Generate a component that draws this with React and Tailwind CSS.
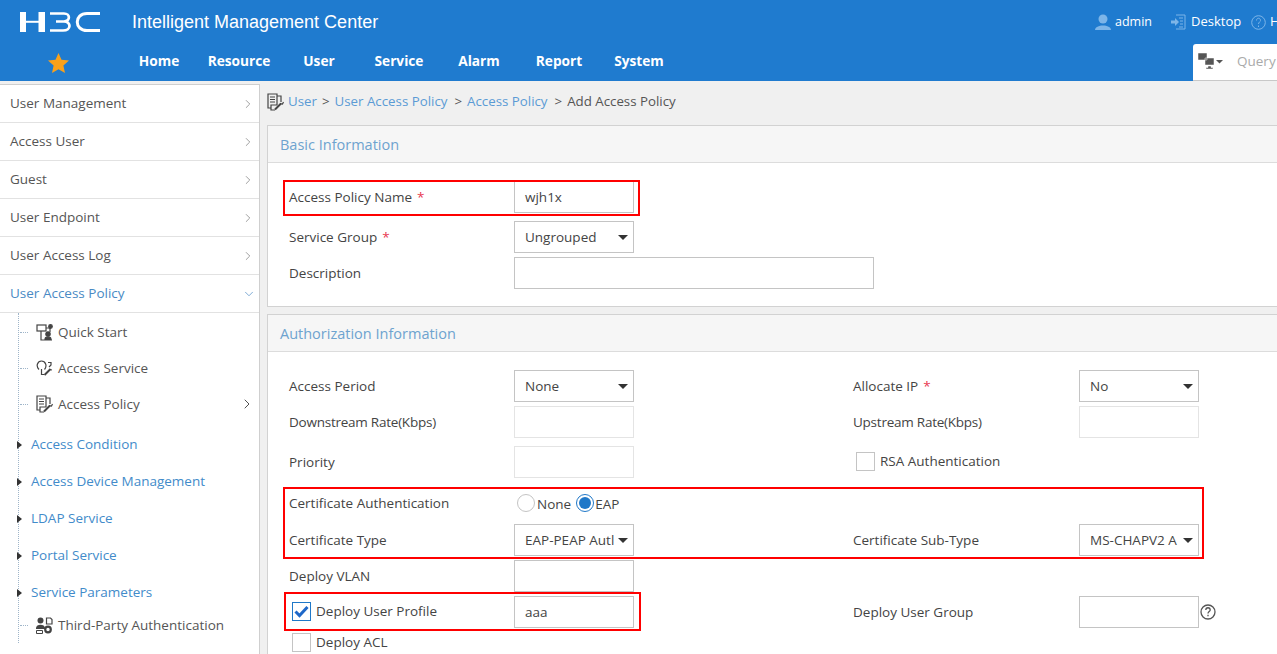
import React from "react";
import { ChevronRight, ChevronDown } from "lucide-react";

const FONT = "font-['Open_Sans','Noto_Sans',sans-serif]";

// ── Small drawn icons ────────────────────────────────────────────────────────
function Logo() {
  return (
    <svg width="82" height="20" viewBox="0 0 82 20" fill="none" stroke="#fff">
      <path d="M1 0h6v20H1zM19.500 0h6.500v20h-6.500z" fill="#fff" stroke="none" />
      <path d="M6 9.800h14" strokeWidth="2" />
      <path d="M31 1.500h14c6.500 0 6.500 7.500 0 8h-8M45 9.500c7.500 0 7.500 9-1 9H31" strokeWidth="2.700" />
      <path d="M81 1.500H68C55 1.500 55 18.500 68 18.500h13" strokeWidth="3" />
    </svg>
  );
}

function PolicyIcon({ className = "" }) {
  return (
    <svg width="17" height="18" viewBox="0 0 17 18" fill="none" stroke="#444" strokeWidth="1.200" className={className}>
      <path d="M1 1h9v11H4v3H1zM10 3h4v6M4 15v2h4" />
      <path d="M3 4h5M3 6.500h5M3 9h5" />
      <path d="M8 16.500l6-6" strokeWidth="2" />
      <path d="M13 10.500l2.500.5 1-2" />
    </svg>
  );
}

function QuickStartIcon() {
  return (
    <svg width="17" height="17" viewBox="0 0 17 17" fill="none" stroke="#444" strokeWidth="1.200">
      <rect x="1" y="1" width="9" height="6" />
      <path d="M5 7v9h11M10 4h4v4" />
      <circle cx="14.500" cy="2.500" r="1.800" fill="#444" />
      <circle cx="12" cy="10" r="2.200" fill="#444" />
      <path d="M9 15.500c0-3.500 6-3.500 6 0z" fill="#444" />
    </svg>
  );
}

function ServiceIcon() {
  return (
    <svg width="17" height="17" viewBox="0 0 17 17" fill="none" stroke="#444" strokeWidth="1.200">
      <path d="M3 9.500C-.5 6 1.500 1 5.500 1s6 5 3 8.500" />
      <path d="M5.500 9v5.500H8" />
      <path d="M8.500 15l6-6" strokeWidth="2" />
      <path d="M12 2.500h3V5l-2 2M13.500 9.500l2.500.5" />
    </svg>
  );
}

function ThirdPartyIcon() {
  return (
    <svg width="17" height="17" viewBox="0 0 17 17" fill="#444">
      <circle cx="4.500" cy="3.500" r="3" />
      <path d="M0 11c0-4.500 9-4.500 9 0v1H0z" />
      <path d="M10.500 1h4l1.500 1.500V7h-5.500z" fill="none" stroke="#444" strokeWidth="1.200" />
      <circle cx="12" cy="12.500" r="2.800" fill="none" stroke="#444" strokeWidth="2.200" />
      <path d="M.500 13.500h6v3h-6z" fill="none" stroke="#444" />
    </svg>
  );
}

// ── Form bits ────────────────────────────────────────────────────────────────
function Label({ children, star, tight }) {
  return (
    <span className={`text-[13.500px] text-[#444] whitespace-nowrap ${tight ? "tracking-[-0.24px]" : ""}`}>
      {children}
      {star && <span className="text-[#e8384f] ml-[5px]">*</span>}
    </span>
  );
}

function Box({ children, wide, light }) {
  return (
    <div className={`${wide ? "w-[360px]" : "w-[120px]"} h-[32px] border ${light ? "border-[#e4e4e4]" : "border-[#c4c4c4]"} bg-white pl-[10px] flex items-center text-[13.500px] text-[#444]`}>
      {children}
    </div>
  );
}

function Select({ value }) {
  return (
    <div className="w-[120px] h-[32px] border border-[#c4c4c4] bg-white pl-[10px] pr-[3px] flex items-center text-[13.500px] text-[#444]">
      <span className="flex-1 whitespace-nowrap">{value}</span>
      <span className="w-0 h-0 ml-[1px] mr-[2px] shrink-0 border-x-[5px] border-x-transparent border-t-[5px] border-t-[#333]" />
    </div>
  );
}

function Check({ checked }) {
  return (
    <span className={`w-[19px] h-[19px] shrink-0 flex items-center justify-center border bg-white ${checked ? "border-[#1f78c8]" : "border-[#c4c4c4]"}`}>
      {checked && (
        <svg width="15" height="13" viewBox="0 0 15 13">
          <path d="M1.500 6.500l4 4 8-8.500" fill="none" stroke="#1f68c8" strokeWidth="3" />
        </svg>
      )}
    </span>
  );
}

function Radio({ checked }) {
  return (
    <span className={`w-[18px] h-[18px] rounded-full shrink-0 flex items-center justify-center border bg-white ${checked ? "border-[#1f78c8]" : "border-[#c4c4c4]"}`}>
      {checked && <span className="w-[12px] h-[12px] rounded-full bg-[#1f78c8]" />}
    </span>
  );
}

// One form line: label / field / label / field, on the same column grid
function Row({ h, a, b, c, d }) {
  return (
    <div className={`grid grid-cols-[225px_339px_226px_120px] items-center ${h}`}>
      <div className="flex items-center">{a}</div>
      <div>{b}</div>
      <div className="flex items-center">{c}</div>
      <div>{d}</div>
    </div>
  );
}

function Card({ title, children, className }) {
  return (
    <section className={`border border-r-0 border-[#d2d2d2] bg-white ${className}`}>
      <h2 className="h-[37px] flex items-center pl-[12px] pt-[1px] bg-[#f6f6f6] border-b border-[#dcdcdc] text-[14.500px] font-normal text-[#6ea3cf]">
        {title}
      </h2>
      {children}
    </section>
  );
}

// ── Sidebar ──────────────────────────────────────────────────────────────────
const topMenus = ["User Management", "Access User", "Guest", "User Endpoint", "User Access Log"];
const treeGroups = ["Access Condition", "Access Device Management", "LDAP Service", "Portal Service", "Service Parameters"];

function Sidebar() {
  return (
    <aside className="w-[260px] h-[570px] mt-[3px] shrink-0 bg-white border-t border-r border-[#cfcfcf] overflow-hidden">
      {topMenus.map((m) => (
        <div key={m} className="h-[38px] flex items-center justify-between pl-[10px] pr-[4px] border-b border-[#e2e2e2] text-[13.500px] text-[#555]">
          {m}
          <ChevronRight size={14} strokeWidth={1.200} color="#777" />
        </div>
      ))}
      <div className="h-[38px] flex items-center justify-between pl-[10px] pr-[3px] border-b border-[#e2e2e2] text-[13.500px] text-[#4a8ac4]">
        User Access Policy
        <ChevronDown size={14} strokeWidth={1.200} color="#4a8ac4" />
      </div>

      <div className="relative">
        <div className="absolute left-[18px] top-0 bottom-0 border-l border-dotted border-[#9fb5c9]" />
        <div className="pt-[1px]">
          <TreeLeaf icon={<QuickStartIcon />} label="Quick Start" />
          <TreeLeaf icon={<ServiceIcon />} label="Access Service" />
          <TreeLeaf icon={<PolicyIcon />} label="Access Policy" arrow />
        </div>
        <div className="pt-[4px]">
          {treeGroups.map((g) => (
            <div key={g} className="relative h-[37px] flex items-center pl-[31px] text-[13.500px] text-[#428bca]">
              <span className="absolute left-[17px] w-0 h-0 border-y-[4px] border-y-transparent border-l-[5px] border-l-[#333]" />
              {g}
            </div>
          ))}
        </div>
        <div className="-mt-[4px]">
          <TreeLeaf icon={<ThirdPartyIcon />} label="Third-Party Authentication" />
        </div>
      </div>
    </aside>
  );
}

function TreeLeaf({ icon, label, arrow }) {
  return (
    <div className="relative h-[36px] flex items-center pl-[36px] pr-[4px] text-[13.500px] text-[#555]">
      <span className="absolute left-[20px] w-[8px] border-t border-dotted border-[#9fb5c9]" />
      <span className="w-[22px] shrink-0">{icon}</span>
      <span className="flex-1">{label}</span>
      {arrow && <ChevronRight size={16} strokeWidth={1.400} color="#444" />}
    </div>
  );
}

// ── Page ─────────────────────────────────────────────────────────────────────
const navItems = ["Home", "Resource", "User", "Service", "Alarm", "Report", "System"];

export default function App() {
  return (
    <div className={`w-[1277px] h-[654px] overflow-hidden bg-[#f0f0f0] ${FONT}`}>
      <header className="h-[81px] bg-[#1f7bcf] text-white">
        <div className="h-[44px] flex items-center overflow-hidden">
          <div className="w-[132px] pl-[19px] shrink-0"><Logo /></div>
          <div className="w-[963px] shrink-0 font-['Liberation_Sans',sans-serif] text-[18px]">Intelligent Management Center</div>
          <svg width="16" height="16" viewBox="0 0 16 16" fill="#7db5e8" className="shrink-0">
            <circle cx="8" cy="5" r="4.500" />
            <path d="M0 16c0-6 16-6 16 0z" />
          </svg>
          <span className="ml-[4px] w-[56px] shrink-0 text-[12.500px] font-medium">admin</span>
          <svg width="15" height="16" viewBox="0 0 15 16" fill="none" stroke="#7db5e8" className="shrink-0">
            <path d="M5 1h9v14H5M8 4h4M9 7h3M9 10h3M8 13h4" />
            <path d="M0 6.500h4V4l4 4-4 4V9.500H0z" fill="#7db5e8" stroke="none" />
          </svg>
          <span className="ml-[5px] w-[60px] shrink-0 text-[13px] font-medium">Desktop</span>
          <svg width="15" height="15" viewBox="0 0 15 15" fill="none" stroke="#7db5e8" className="shrink-0">
            <circle cx="7.500" cy="7.500" r="6.800" />
            <path d="M5.500 5.500c0-3 4-3 4 0 0 1.500-2 1.500-2 3.500M7.500 10.500v1.500" />
          </svg>
          <span className="ml-[4px] text-[13px] font-medium shrink-0">H</span>
        </div>
        <div className="h-[37px] flex items-stretch">
          <div className="w-[119px] shrink-0 flex items-center pl-[48px]">
            <svg width="21" height="20" viewBox="0 0 21 20"><path d="M10.500 0l3 6.800 7.500.8-5.600 5 1.600 7.400-6.500-3.800L4 20l1.600-7.400L0 7.600l7.500-.8z" fill="#f9a11b" /></svg>
          </div>
          <nav className="flex pb-[2px]">
            {navItems.map((n) => (
              <a key={n} className="w-[80px] flex items-center justify-center text-[13.700px] font-bold">{n}</a>
            ))}
          </nav>
          <div className="ml-[514px] w-[84px] shrink-0 bg-white rounded-tl-[3px] border-b border-[#c8c8c8] flex items-center pl-[5px] pb-[2px]">
            <svg width="25" height="18" viewBox="0 0 25 18" fill="#555">
              <path d="M0 1h9v7H0zM7 6h9v7H7zM10 14h3v1.500h2V17H8v-1.500h2z" stroke="#fff" strokeWidth=".5" />
              <path d="M18 8h7l-3.500 3.500z" />
            </svg>
            <span className="ml-[14px] text-[13.500px] text-[#aaa]">Query</span>
          </div>
        </div>
      </header>

      <div className="flex">
        <Sidebar />
        <main className="flex-1 min-w-0 pl-[7px]">
          <div className="h-[44px] pb-[2px] flex items-center text-[13.300px] text-[#555] whitespace-nowrap">
            <PolicyIcon />
            <a className="text-[#5b9bd5] ml-[4px]">User</a><span className="mx-[5px]">&gt;</span>
            <a className="text-[#5b9bd5]">User Access Policy</a><span className="ml-[7px] mr-[5px]">&gt;</span>
            <a className="text-[#5b9bd5]">Access Policy</a><span className="ml-[7px] mr-[5px]">&gt;</span>
            <span>Add Access Policy</span>
          </div>

          <Card title="Basic Information" className="h-[182px]">
            <div className="relative pl-[21px] pt-[18px]">
              <div className="absolute left-[15px] top-[17px] w-[357px] h-[36px] border-2 border-[#f00]" />
              <Row h="h-[32px]" a={<Label star>Access Policy Name</Label>} b={<Box>wjh1x</Box>} />
              <div className="h-[8px]" />
              <Row h="h-[32px]" a={<Label star>Service Group</Label>} b={<Select value="Ungrouped" />} />
              <div className="h-[4px]" />
              <Row h="h-[32px]" a={<Label>Description</Label>} b={<Box wide />} />
            </div>
          </Card>

          <Card title="Authorization Information" className="mt-[7px] h-[400px]">
            <div className="relative pl-[21px] pt-[18px]">
              <div className="absolute left-[15px] top-[135px] w-[921px] h-[72px] border-2 border-[#f00]" />
              <div className="absolute left-[16px] top-[240px] w-[357px] h-[39px] border-2 border-[#f00]" />
              <Row h="h-[32px]" a={<Label>Access Period</Label>} b={<Select value="None" />} c={<Label star>Allocate IP</Label>} d={<Select value="No" />} />
              <div className="h-[4px]" />
              <Row h="h-[32px]" a={<Label tight>Downstream Rate(Kbps)</Label>} b={<Box light />} c={<Label tight>Upstream Rate(Kbps)</Label>} d={<Box light />} />
              <div className="h-[8px]" />
              <Row
                h="h-[32px]"
                a={<Label>Priority</Label>}
                b={<Box light />}
                c={<span className="flex items-center gap-[5px] pl-[3px] -mt-[2px]"><Check /><Label>RSA Authentication</Label></span>}
              />
              <div className="h-[12px]" />
              <Row
                h="h-[26px]"
                a={<Label>Certificate Authentication</Label>}
                b={
                  <div className="flex items-center pl-[3px] text-[13.500px] text-[#444]">
                    <Radio /><span className="ml-[2px] mt-[3px]">None</span>
                    <span className="ml-[5px]"><Radio checked /></span><span className="ml-[1px] mt-[3px]">EAP</span>
                  </div>
                }
              />
              <div className="h-[8px]" />
              <Row
                h="h-[32px]"
                a={<Label>Certificate Type</Label>}
                b={<Select value="EAP-PEAP Autl" />}
                c={<Label>Certificate Sub-Type</Label>}
                d={<Select value="MS-CHAPV2 A" />}
              />
              <div className="h-[4px]" />
              <Row h="h-[32px]" a={<Label>Deploy VLAN</Label>} b={<Box />} />
              <div className="h-[4px]" />
              <Row
                h="h-[32px]"
                a={<span className="flex items-center gap-[5px] pl-[3px] -mt-[2px]"><Check checked /><Label>Deploy User Profile</Label></span>}
                b={<Box>aaa</Box>}
                c={<Label>Deploy User Group</Label>}
                d={
                  <div className="relative">
                    <Box />
                    <svg width="16" height="16" viewBox="0 0 16 16" fill="none" stroke="#555" strokeWidth="1.300" className="absolute left-[121px] top-[8px]">
                      <circle cx="8" cy="8" r="7" />
                      <path d="M5.800 6c0-3 4.400-3 4.400 0 0 1.600-2.200 1.600-2.200 3.500M8 10.800v1.500" />
                    </svg>
                  </div>
                }
              />
              <div className="h-[3px]" />
              <Row
                h="h-[22px]"
                a={<span className="flex items-center gap-[5px] pl-[3px]"><Check /><Label>Deploy ACL</Label></span>}
              />
            </div>
          </Card>
        </main>
      </div>
    </div>
  );
}
